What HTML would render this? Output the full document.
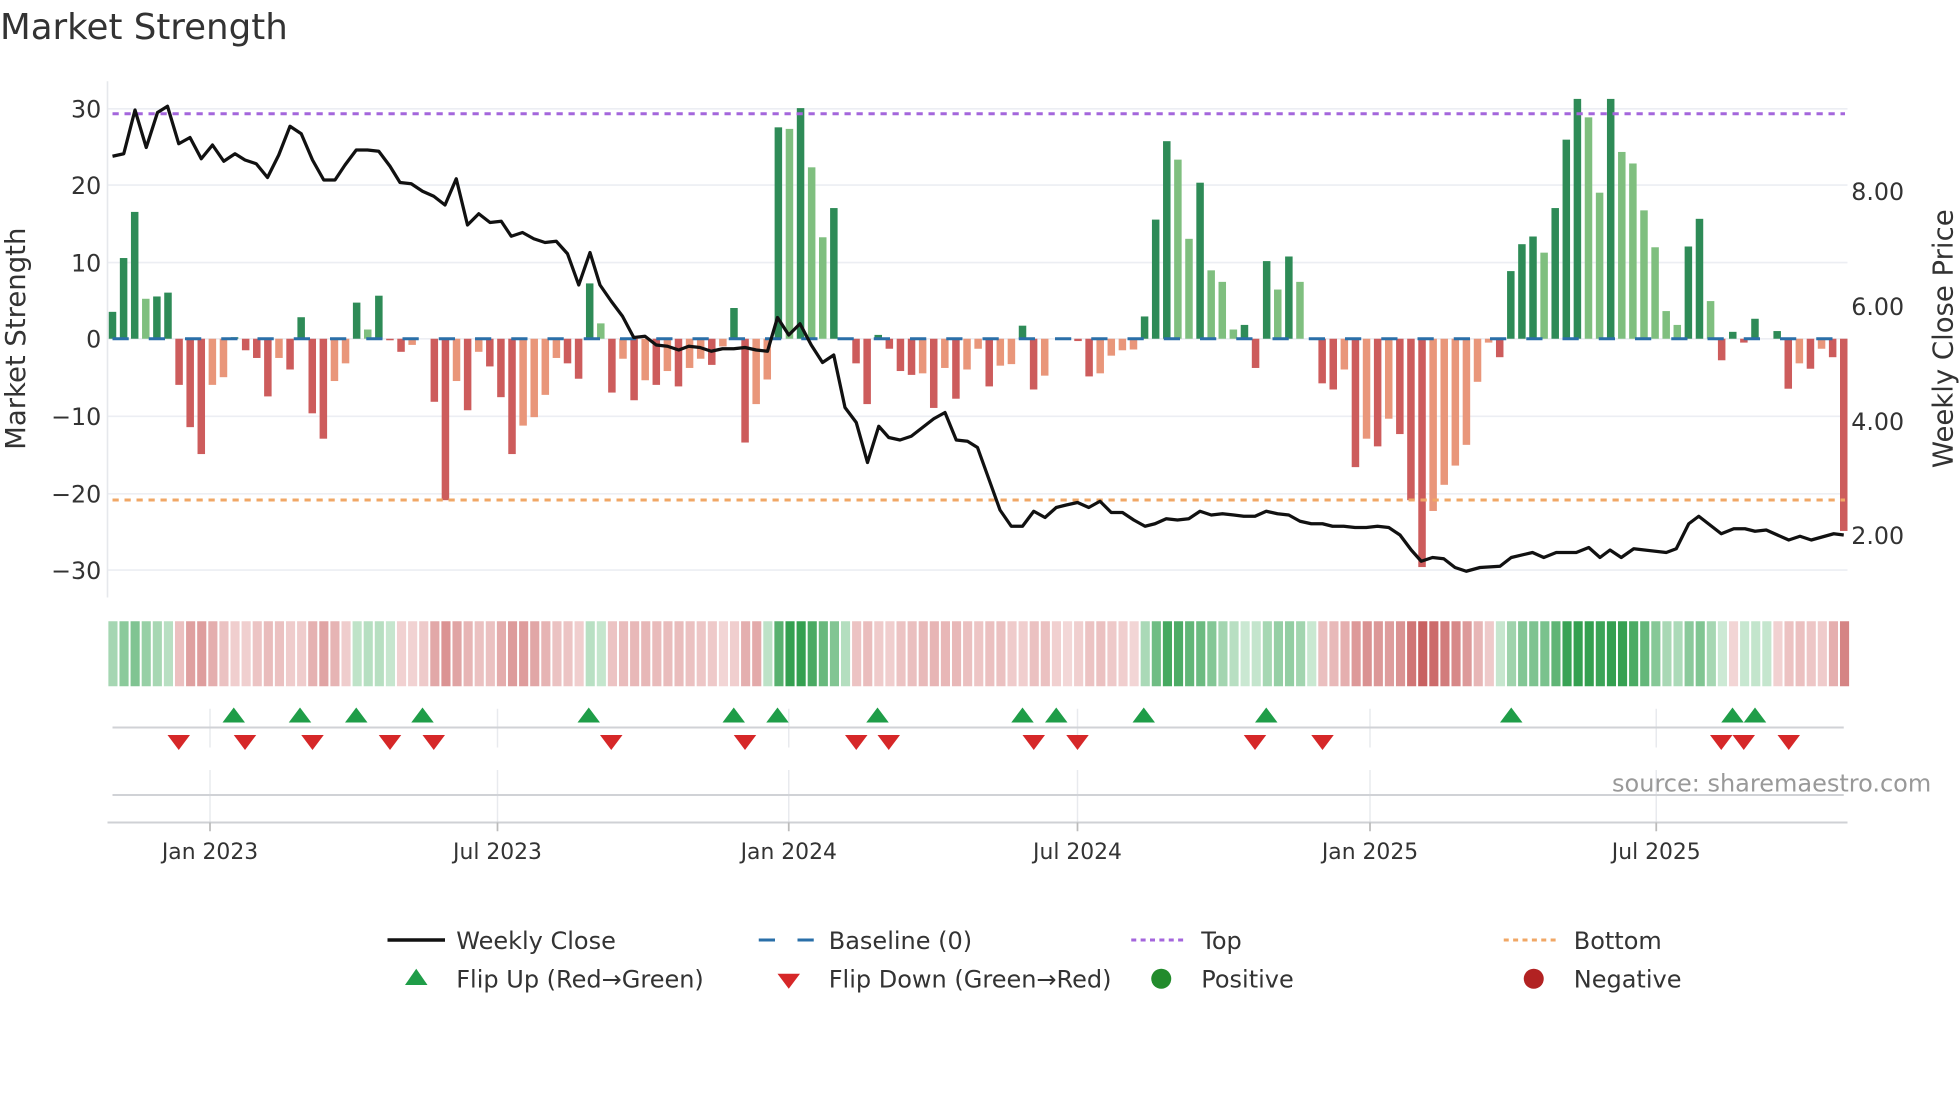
<!DOCTYPE html>
<html><head><meta charset="utf-8"><style>
html,body{margin:0;padding:0;background:#fff;}
svg{display:block;font-family:"DejaVu Sans","Liberation Sans",sans-serif;}
</style></head><body>
<svg id="c" width="1960" height="1102" viewBox="0 0 1568 881.6" xmlns="http://www.w3.org/2000/svg">
<rect width="1568" height="882" fill="#fff"/>
<text x="0" y="31" font-size="28.5" fill="#333">Market Strength</text>
<g id="grid" stroke="#eceef3" stroke-width="1.3"></g>
<line x1="86" y1="65" x2="86" y2="478" stroke="#e6e8ec" stroke-width="1.3"/>
<g id="bars"></g>
<line x1="90" y1="271" x2="1476" y2="271" stroke="#2a6fa8" stroke-width="2.4" stroke-dasharray="13 16"/>
<line x1="90" y1="91" x2="1476" y2="91" stroke="#a466dc" stroke-width="2.4" stroke-dasharray="5 4.6"/>
<line x1="90" y1="400" x2="1476" y2="400" stroke="#f0a766" stroke-width="2.4" stroke-dasharray="5 4.6"/>
<polyline id="price" fill="none" stroke="#111" stroke-width="2.6" stroke-linejoin="round"/>
<g font-size="19" fill="#333" text-anchor="end">
<text x="81" y="94">30</text><text x="81" y="155">20</text><text x="81" y="217">10</text><text x="81" y="278">0</text>
<text x="81" y="340">−10</text><text x="81" y="402">−20</text><text x="81" y="463">−30</text>
</g>
<g font-size="19" fill="#333">
<text x="1481" y="160">8.00</text><text x="1481" y="252">6.00</text><text x="1481" y="344">4.00</text><text x="1481" y="435">2.00</text>
</g>
<text transform="translate(20,271) rotate(-90)" font-size="22" fill="#333" text-anchor="middle">Market Strength</text>
<text transform="translate(1562,271) rotate(-90)" font-size="22" fill="#333" text-anchor="middle">Weekly Close Price</text>
<g id="heat"></g>
<g stroke="#e8eaee" stroke-width="1.2">
<line x1="168" y1="567" x2="168" y2="598"/><line x1="398" y1="567" x2="398" y2="598"/><line x1="631" y1="567" x2="631" y2="598"/><line x1="862" y1="567" x2="862" y2="598"/><line x1="1096" y1="567" x2="1096" y2="598"/><line x1="1325" y1="567" x2="1325" y2="598"/>
<line x1="168" y1="616" x2="168" y2="658"/><line x1="398" y1="616" x2="398" y2="658"/><line x1="631" y1="616" x2="631" y2="658"/><line x1="862" y1="616" x2="862" y2="658"/><line x1="1096" y1="616" x2="1096" y2="658"/><line x1="1325" y1="616" x2="1325" y2="658"/>
</g>
<line x1="90" y1="582" x2="1475" y2="582" stroke="#d0d2d6" stroke-width="1.6"/>
<line x1="90" y1="636" x2="1475" y2="636" stroke="#d0d2d6" stroke-width="1.6"/>
<line x1="86" y1="658" x2="1478" y2="658" stroke="#cfd1d5" stroke-width="1.6"/>
<g stroke="#bbb" stroke-width="1.4">
<line x1="168" y1="658" x2="168" y2="665"/><line x1="398" y1="658" x2="398" y2="665"/><line x1="631" y1="658" x2="631" y2="665"/><line x1="862" y1="658" x2="862" y2="665"/><line x1="1096" y1="658" x2="1096" y2="665"/><line x1="1325" y1="658" x2="1325" y2="665"/>
</g>
<g id="tri"></g>
<text x="1545" y="633" font-size="19.2" fill="#999" text-anchor="end">source: sharemaestro.com</text>
<g font-size="17.5" fill="#333" text-anchor="middle">
<text x="168" y="687">Jan 2023</text><text x="398" y="687">Jul 2023</text><text x="631" y="687">Jan 2024</text><text x="862" y="687">Jul 2024</text><text x="1096" y="687">Jan 2025</text><text x="1325" y="687">Jul 2025</text>
</g>
<g font-size="19.2" fill="#333">
<line x1="310" y1="752" x2="356" y2="752" stroke="#111" stroke-width="2.8"/>
<text x="365" y="759">Weekly Close</text>
<line x1="607" y1="752" x2="651" y2="752" stroke="#2a6fa8" stroke-width="2.4" stroke-dasharray="13 18"/>
<text x="663" y="759">Baseline (0)</text>
<line x1="905" y1="752" x2="949" y2="752" stroke="#a466dc" stroke-width="2.4" stroke-dasharray="4 3.5"/>
<text x="961" y="759">Top</text>
<line x1="1203" y1="752" x2="1247" y2="752" stroke="#f0a766" stroke-width="2.4" stroke-dasharray="4 3.5"/>
<text x="1259" y="759">Bottom</text>
<polygon points="324,788 342,788 333,775" fill="#1f9d48"/>
<text x="365" y="790">Flip Up (Red→Green)</text>
<polygon points="622,779 640,779 631,791" fill="#d62728"/>
<text x="663" y="790">Flip Down (Green→Red)</text>
<circle cx="929" cy="783" r="8" fill="#228b2c"/>
<text x="961" y="790">Positive</text>
<circle cx="1227" cy="783" r="8" fill="#b22222"/>
<text x="1259" y="790">Negative</text>
</g>
</svg>
<script>
(function(){
var NS="http://www.w3.org/2000/svg";
function el(p,t,a){var e=document.createElementNS(NS,t);for(var k in a)e.setAttribute(k,a[k]);p.appendChild(e);return e;}
var g=document.getElementById('grid');
[87,148,210,271,333,395,456].forEach(function(y){el(g,'line',{x1:86,x2:1478,y1:y,y2:y});});
var D=[[3.5,'d'],[10.5,'d'],[16.5,'d'],[5.2,'l'],[5.5,'d'],[6,'d'],[-6,'r'],[-11.5,'r'],[-15,'r'],[-6,'s'],[-5,'s'],[0.2,'d'],[-1.5,'r'],[-2.5,'r'],[-7.5,'r'],[-2.5,'s'],[-4,'r'],[2.8,'d'],[-9.7,'r'],[-13,'r'],
[-5.5,'s'],[-3.2,'s'],[4.7,'d'],[1.2,'l'],[5.6,'d'],[-0.2,'r'],[-1.7,'r'],[-0.8,'s'],[0,'r'],[-8.2,'r'],[-21,'r'],[-5.5,'s'],[-9.3,'r'],[-1.7,'s'],[-3.6,'r'],[-7.6,'r'],[-15,'r'],[-11.3,'s'],[-10.2,'s'],[-7.3,'s'],
[-2.5,'s'],[-3.2,'r'],[-5.2,'r'],[7.2,'d'],[2,'l'],[-7,'r'],[-2.6,'s'],[-8,'r'],[-5.4,'s'],[-6,'r'],[-4.2,'s'],[-6.2,'r'],[-3.8,'s'],[-2.6,'s'],[-3.4,'r'],[-1,'s'],[4,'d'],[-13.5,'r'],[-8.5,'s'],[-5.3,'s'],
[27.5,'d'],[27.3,'l'],[30,'d'],[22.3,'l'],[13.2,'l'],[17,'d'],[0,'r'],[-3.2,'r'],[-8.5,'r'],[0.5,'d'],[-1.3,'r'],[-4.2,'r'],[-4.7,'r'],[-4.5,'s'],[-9,'r'],[-3.8,'s'],[-7.8,'r'],[-4,'s'],[-1.3,'s'],[-6.2,'r'],
[-3.5,'s'],[-3.3,'s'],[1.7,'d'],[-6.6,'r'],[-4.8,'s'],[0,'r'],[0,'r'],[-0.3,'r'],[-4.9,'r'],[-4.5,'s'],[-2.2,'s'],[-1.5,'s'],[-1.4,'s'],[2.9,'d'],[15.5,'d'],[25.7,'d'],[23.3,'l'],[13,'l'],[20.3,'d'],[8.9,'l'],
[7.4,'l'],[1.2,'l'],[1.8,'d'],[-3.8,'r'],[10.1,'d'],[6.4,'l'],[10.7,'d'],[7.4,'l'],[0,'r'],[-5.8,'r'],[-6.6,'r'],[-4,'s'],[-16.7,'r'],[-13,'s'],[-14,'r'],[-10.4,'s'],[-12.4,'r'],[-21,'r'],[-29.7,'r'],[-22.4,'s'],
[-19,'s'],[-16.5,'s'],[-13.8,'s'],[-5.6,'s'],[-0.5,'s'],[-2.4,'r'],[8.8,'d'],[12.3,'d'],[13.3,'d'],[11.2,'l'],[17,'d'],[25.9,'d'],[31.2,'d'],[28.8,'l'],[19,'l'],[31.2,'d'],[24.3,'l'],[22.8,'l'],[16.7,'l'],[11.9,'l'],
[3.6,'l'],[1.8,'l'],[12,'d'],[15.6,'d'],[4.9,'l'],[-2.8,'r'],[0.9,'d'],[-0.5,'r'],[2.6,'d'],[0,'r'],[1,'d'],[-6.5,'r'],[-3.2,'s'],[-3.9,'r'],[-1.3,'s'],[-2.4,'r'],[-25,'r']];
var C={d:'#2e8b57',l:'#7fbf7f',r:'#cd5c5c',s:'#e9967a'};
var n=D.length, step=(1475-90)/(n-1), U=6.15;
var bars=document.getElementById('bars'), heat=document.getElementById('heat');
function mix(a,b,t){return 'rgb('+[0,1,2].map(function(i){return Math.round(a[i]+(b[i]-a[i])*t);}).join(',')+')';}
for(var i=0;i<n;i++){
 var v=D[i][0], x=90+i*step, h=Math.abs(v)*U;
 if(h>0.3) el(bars,'rect',{x:x-3,y:v>0?271-h:271,width:6,height:h,fill:C[D[i][1]]});
 var s=0,c=0;for(var j=Math.max(0,i-1);j<=Math.min(n-1,i+1);j++){s+=D[j][0]*(j==i?2:1);c+=(j==i?2:1);}s/=c;
 var t=Math.min(1,Math.pow(Math.abs(s)/26,0.9));t=0.08+0.92*t;
 var col=s>0?mix([218,240,224],[52,160,80],t):mix([247,226,226],[200,96,96],t);
 el(heat,'rect',{x:86+i*8.88+0.7,y:497,width:7.3,height:52,fill:col});
}
var P=[[90,125],[99,123],[108,88],[117,118],[126,90],[134,85],[143,115],[152,110],[161,127],[170,116],[179,129],[188,123],[196,128],[205,131],[214,142],[223,124],[232,101],[241,107],[250,128],[259,144],[268,144],[276,132],[285,120],[294,120],[303,121],[312,133],[320,146],[329,147],[338,153],[347,157],[356,164],[365,143],[374,180],[383,171],[392,178],[401,177],[409,189],[418,186],[427,191],[436,194],[445,193],[454,203],[463,228],[472,202],[480,228],[489,241],[498,253],[507,270],[516,269],[525,276],[534,277],[543,280],[551,277],[560,278],[569,281],[578,279],[587,279],[596,278],[605,280],[614,281],[622,254],[631,268],[640,259],[649,276],[658,290],[667,284],[676,326],[685,338],[694,370],[703,341],[711,350],[720,352],[729,349],[738,342],[747,335],[756,330],[765,352],[774,353],[782,358],[791,383],[800,408],[809,421],[818,421],[827,409],[836,414],[845,406],[853,404],[862,402],[871,406],[880,401],[889,410],[898,410],[907,416],[916,421],[924,419],[933,415],[942,416],[951,415],[960,409],[969,412],[978,411],[987,412],[995,413],[1004,413],[1013,409],[1022,411],[1031,412],[1040,417],[1049,419],[1058,419],[1066,421],[1075,421],[1084,422],[1093,422],[1102,421],[1111,422],[1120,428],[1129,440],[1137,449],[1146,446],[1155,447],[1164,454],[1173,457],[1184,454],[1200,453],[1209,446],[1226,442],[1235,446],[1245,442],[1261,442],[1271,438],[1280,446],[1288,440],[1297,446],[1307,439],[1333,442],[1341,439],[1351,419],[1359,413],[1377,427],[1387,423],[1396,423],[1404,425],[1413,424],[1431,432],[1440,429],[1449,432],[1467,427],[1475,428]];
document.getElementById('price').setAttribute('points',P.map(function(p){return p.join(',');}).join(' '));
var tri=document.getElementById('tri');
[187,240,285,338,471,587,622,702,818,845,915,1013,1209,1386,1404].forEach(function(x){el(tri,'polygon',{points:(x-9)+',578 '+(x+9)+',578 '+x+',566',fill:'#1f9d48'});});
[143,196,250,312,347,489,596,685,711,827,862,1004,1058,1377,1395,1431].forEach(function(x){el(tri,'polygon',{points:(x-9)+',588 '+(x+9)+',588 '+x+',600',fill:'#d62728'});});
})();
</script>
</body></html>
